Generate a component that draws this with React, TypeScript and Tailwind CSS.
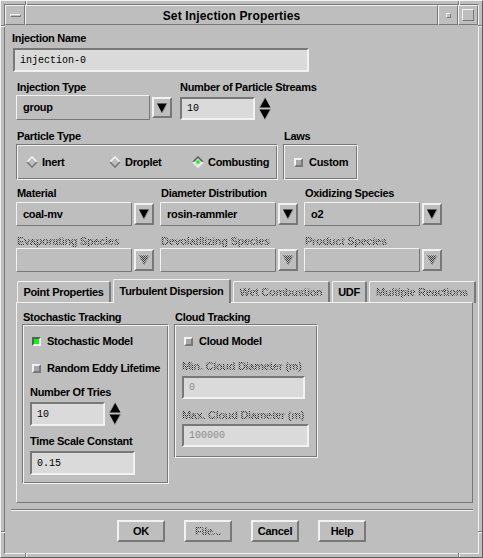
import React from "react";

// Motif-style bevels
const raised =
  "border-2 border-t-[#f2f2f2] border-l-[#f2f2f2] border-r-[#787878] border-b-[#787878]";
const sunken =
  "border-2 border-t-[#787878] border-l-[#787878] border-r-[#f2f2f2] border-b-[#f2f2f2]";
const raised1 =
  "border border-t-[#f2f2f2] border-l-[#f2f2f2] border-r-[#787878] border-b-[#787878]";
const etched =
  "border border-t-[#787878] border-l-[#787878] border-r-[#f2f2f2] border-b-[#f2f2f2] shadow-[inset_1px_1px_0_#f2f2f2,inset_-1px_-1px_0_#787878]";
const stipple =
  "bg-[repeating-conic-gradient(#2e2e2e_0_25%,transparent_0_50%)] bg-[length:2px_2px] bg-clip-text text-transparent";
const boldText = "text-[11px] font-bold tracking-[-0.3px] whitespace-nowrap";

function Label({
  children,
  disabled = false,
  className = "",
}: {
  children: React.ReactNode;
  disabled?: boolean;
  className?: string;
}) {
  return (
    <div className={`h-[13px] leading-[13px] ${boldText} ${className}`}>
      <span className={disabled ? stipple : "text-black"}>{children}</span>
    </div>
  );
}

function StipplePattern() {
  return (
    <defs>
      <pattern id="stip" width="2" height="2" patternUnits="userSpaceOnUse">
        <rect width="1" height="1" fill="#3a3a3a" />
        <rect x="1" y="1" width="1" height="1" fill="#3a3a3a" />
      </pattern>
    </defs>
  );
}

function DownArrow({ disabled = false }: { disabled?: boolean }) {
  return (
    <svg width="12" height="12" viewBox="0 0 12 12">
      {disabled && <StipplePattern />}
      <polygon points="1,1.5 11,1.5 6,11" fill={disabled ? "url(#stip)" : "#000"} />
      <line x1="11" y1="1.5" x2="6.5" y2="10" stroke="#8c8c8c" strokeWidth="1" />
    </svg>
  );
}

function TextField({
  w,
  h,
  value,
  disabled = false,
  className = "",
}: {
  w: string;
  h: string;
  value: string;
  disabled?: boolean;
  className?: string;
}) {
  return (
    <div
      className={`${w} ${h} ${sunken} bg-[#dadada] flex items-center pl-[5px] font-['Liberation_Mono',monospace] text-[10px] ${
        disabled ? "text-[#8e8e8e]" : "text-black"
      } ${className}`}
    >
      {value}
    </div>
  );
}

function OptionMenu({
  w,
  value = "",
  disabled = false,
  fieldH = "h-[24px]",
  arrowH = "h-[22px]",
}: {
  w: string;
  value?: string;
  disabled?: boolean;
  fieldH?: string;
  arrowH?: string;
}) {
  return (
    <div className="flex items-center">
      <div className={`${w} ${fieldH} ${raised1} flex items-center pl-[6px] ${boldText}`}>{value}</div>
      <div className={`ml-[2px] w-[20px] ${arrowH} ${raised} flex items-center justify-center`}>
        <DownArrow disabled={disabled} />
      </div>
    </div>
  );
}

function Spinner() {
  return (
    <div className="ml-[3px] w-[14px] h-[23px] flex flex-col items-center justify-between">
      <svg width="12" height="11" viewBox="0 0 12 11">
        <polygon points="6,0.5 11.5,10.5 0.5,10.5" fill="#000" />
        <line x1="6" y1="0.5" x2="0.5" y2="10.5" stroke="#9a9a9a" />
      </svg>
      <svg width="12" height="11" viewBox="0 0 12 11">
        <polygon points="0.5,0.5 11.5,0.5 6,10.5" fill="#000" />
        <line x1="11.5" y1="0.5" x2="6" y2="10.5" stroke="#9a9a9a" />
      </svg>
    </div>
  );
}

function Diamond({ on = false }: { on?: boolean }) {
  return (
    <svg width="12" height="12" viewBox="0 0 12 12">
      <polygon points="6,0.5 11.5,6 6,11.5 0.5,6" fill={on ? "#d6d6d6" : "#bebebe"} />
      <polyline points="1,6 6,1 11,6" fill="none" stroke={on ? "#5e5e5e" : "#f2f2f2"} strokeWidth="1.6" />
      <polyline points="1,6 6,11 11,6" fill="none" stroke={on ? "#f2f2f2" : "#7a7a7a"} strokeWidth="1.6" />
      {on && <rect x="4.5" y="4.5" width="3" height="3" fill="#00ff00" />}
    </svg>
  );
}

function Radio({ label, on = false }: { label: string; on?: boolean }) {
  return (
    <div className="w-[83px] flex items-center">
      <Diamond on={on} />
      <span className={`ml-[4px] ${boldText}`}>{label}</span>
    </div>
  );
}

function Check({ on = false }: { on?: boolean }) {
  return (
    <div
      className={`w-[9px] h-[9px] ${
        on
          ? "border-2 border-t-[#5e5e5e] border-l-[#5e5e5e] border-r-[#f2f2f2] border-b-[#f2f2f2] bg-[#00ff00]"
          : "border-2 border-t-[#f2f2f2] border-l-[#f2f2f2] border-r-[#787878] border-b-[#787878] bg-[#a6a6a6]"
      }`}
    />
  );
}

function CheckRow({ label, on = false, className = "" }: { label: string; on?: boolean; className?: string }) {
  return (
    <div className={`h-[13px] flex items-center ${className}`}>
      <Check on={on} />
      <span className={`ml-[6px] ${boldText}`}>{label}</span>
    </div>
  );
}

function Tab({ label, w, active = false, disabled = false }: { label: string; w: string; active?: boolean; disabled?: boolean }) {
  return (
    <div
      className={`${w} ${
        active ? "h-[24px] relative z-10 bg-[#bebebe]" : "h-[22px]"
      } border-t border-l border-r-2 border-t-[#f2f2f2] border-l-[#f2f2f2] border-r-[#787878] rounded-t-[2px] flex items-center justify-center ${boldText}`}
    >
      <span className={disabled ? stipple : "text-black"}>{label}</span>
    </div>
  );
}

function Button({ label, disabled = false }: { label: string; disabled?: boolean }) {
  return (
    <div className={`w-[48px] h-[22px] ${raised} flex items-center justify-center ${boldText}`}>
      <span className={disabled ? stipple : "text-black"}>{label}</span>
    </div>
  );
}

// small notches in the window frame marking the resize corners
function Notch({ className }: { className: string }) {
  return <div className={`absolute ${className}`} />;
}

export default function App() {
  return (
    <div className="relative w-[483px] h-[558px] bg-[#bebebe] border border-t-[#f2f2f2] border-l-[#f2f2f2] border-r-[#5e5e5e] border-b-[#5e5e5e] p-[3px] font-['Liberation_Sans',Arial,sans-serif] text-black select-none">
      <Notch className="left-[24px] top-0 w-[2px] h-[4px] border-l border-l-[#787878] border-r border-r-[#f2f2f2]" />
      <Notch className="left-[457px] top-0 w-[2px] h-[4px] border-l border-l-[#787878] border-r border-r-[#f2f2f2]" />
      <Notch className="left-[24px] bottom-0 w-[2px] h-[4px] border-l border-l-[#787878] border-r border-r-[#f2f2f2]" />
      <Notch className="left-[457px] bottom-0 w-[2px] h-[4px] border-l border-l-[#787878] border-r border-r-[#f2f2f2]" />
      <Notch className="left-0 top-[24px] w-[4px] h-[2px] border-t border-t-[#787878] border-b border-b-[#f2f2f2]" />
      <Notch className="right-0 top-[24px] w-[4px] h-[2px] border-t border-t-[#787878] border-b border-b-[#f2f2f2]" />
      <Notch className="left-0 bottom-[24px] w-[4px] h-[2px] border-t border-t-[#787878] border-b border-b-[#f2f2f2]" />
      <Notch className="right-0 bottom-[24px] w-[4px] h-[2px] border-t border-t-[#787878] border-b border-b-[#f2f2f2]" />

      <div className="flex flex-col h-full border border-t-[#787878] border-l-[#787878] border-r-[#f2f2f2] border-b-[#f2f2f2]">
        {/* title bar */}
        <div className="flex h-[20px] shrink-0">
          <div className={`w-[20px] h-full ${raised1} flex items-center justify-center`}>
            <div className="w-[11px] h-[3px] border border-t-[#f2f2f2] border-l-[#f2f2f2] border-r-[#787878] border-b-[#787878]" />
          </div>
          <div className={`flex-1 h-full ${raised1} flex items-center justify-center pt-[1px] text-[12px] font-bold tracking-[0.15px]`}>
            Set Injection Properties
          </div>
          <div className={`w-[20px] h-full ${raised1} flex items-center justify-center`}>
            <div className="w-[5px] h-[5px] border border-t-[#f2f2f2] border-l-[#f2f2f2] border-r-[#787878] border-b-[#787878]" />
          </div>
          <div className={`w-[20px] h-full ${raised1} flex items-center justify-center`}>
            <div className="w-[12px] h-[12px] border border-t-[#f2f2f2] border-l-[#f2f2f2] border-r-[#787878] border-b-[#787878]" />
          </div>
        </div>

        {/* injection name */}
        <Label className="mt-[7px] ml-[7px]">Injection Name</Label>
        <TextField w="w-[296px]" h="h-[24px]" value="injection-0" className="mt-[3px] ml-[8px]" />

        {/* injection type / streams */}
        <div className="flex mt-[9px] ml-[11px]">
          <div className="flex flex-col">
            <Label className="pl-[1px]">Injection Type</Label>
            <div className="mt-[1px]">
              <OptionMenu w="w-[134px]" value="group" fieldH="h-[25px]" arrowH="h-[21px]" />
            </div>
          </div>
          <div className="flex flex-col ml-[8px]">
            <Label>Number of Particle Streams</Label>
            <div className="flex mt-[3px]">
              <TextField w="w-[75px]" h="h-[23px]" value="10" />
              <Spinner />
            </div>
          </div>
        </div>

        {/* particle type / laws */}
        <div className="flex mt-[10px] ml-[11px]">
          <div className="flex flex-col">
            <Label className="pl-[1px]">Particle Type</Label>
            <div className={`mt-[1px] w-[262px] h-[36px] ${etched} flex items-center pl-[9px]`}>
              <Radio label="Inert" />
              <Radio label="Droplet" />
              <Radio label="Combusting" on />
            </div>
          </div>
          <div className="flex flex-col ml-[5px]">
            <Label className="pl-[1px]">Laws</Label>
            <div className={`mt-[1px] w-[75px] h-[36px] ${etched} flex items-center pl-[10px]`}>
              <CheckRow label="Custom" />
            </div>
          </div>
        </div>

        {/* species selectors */}
        <div className="flex gap-[6px] mt-[7px] ml-[11px]">
          <div className="flex flex-col">
            <Label className="pl-[1px]">Material</Label>
            <div className="mt-[2px]">
              <OptionMenu w="w-[116px]" value="coal-mv" />
            </div>
          </div>
          <div className="flex flex-col">
            <Label className="pl-[1px]">Diameter Distribution</Label>
            <div className="mt-[2px]">
              <OptionMenu w="w-[116px]" value="rosin-rammler" />
            </div>
          </div>
          <div className="flex flex-col">
            <Label className="pl-[1px]">Oxidizing Species</Label>
            <div className="mt-[2px]">
              <OptionMenu w="w-[116px]" value="o2" />
            </div>
          </div>
        </div>
        <div className="flex gap-[6px] mt-[9px] ml-[11px]">
          <div className="flex flex-col">
            <Label className="pl-[1px]" disabled>
              Evaporating Species
            </Label>
            <OptionMenu w="w-[116px]" disabled />
          </div>
          <div className="flex flex-col">
            <Label className="pl-[1px]" disabled>
              Devolatilizing Species
            </Label>
            <OptionMenu w="w-[116px]" disabled />
          </div>
          <div className="flex flex-col">
            <Label className="pl-[1px]" disabled>
              Product Species
            </Label>
            <OptionMenu w="w-[116px]" disabled />
          </div>
        </div>

        {/* tabs */}
        <div className="flex items-end gap-[2px] mt-[7px] ml-[12px] h-[24px]">
          <Tab label="Point Properties" w="w-[94px]" />
          <Tab label="Turbulent Dispersion" w="w-[118px]" active />
          <Tab label="Wet Combustion" w="w-[97px]" disabled />
          <Tab label="UDF" w="w-[35px]" />
          <Tab label="Multiple Reactions" w="w-[107px]" disabled />
        </div>
        <div className="relative -mt-[1px] ml-[11px] w-[457px] h-[201px] border border-t-[#f2f2f2] border-l-[#f2f2f2] border-r-[#787878] border-b-[#787878] pt-[8px] pl-[5px] flex">
          {/* stochastic tracking */}
          <div className="flex flex-col">
            <Label className="pl-[1px]">Stochastic Tracking</Label>
            <div className={`w-[147px] h-[160px] ${etched} flex flex-col pt-[10px] pl-[9px]`}>
              <CheckRow label="Stochastic Model" on />
              <CheckRow label="Random Eddy Lifetime" className="mt-[14px]" />
              <Label className="mt-[11px] -ml-[2px]">Number Of Tries</Label>
              <div className="flex mt-[3px] -ml-[2px]">
                <TextField w="w-[75px]" h="h-[24px]" value="10" />
                <Spinner />
              </div>
              <Label className="mt-[9px] -ml-[2px]">Time Scale Constant</Label>
              <TextField w="w-[105px]" h="h-[24px]" value="0.15" className="mt-[3px] -ml-[2px]" />
            </div>
          </div>
          {/* cloud tracking */}
          <div className="flex flex-col ml-[5px]">
            <Label className="pl-[1px]">Cloud Tracking</Label>
            <div className={`w-[144px] h-[134px] ${etched} flex flex-col pt-[10px] pl-[9px]`}>
              <CheckRow label="Cloud Model" />
              <Label className="mt-[12px] -ml-[2px]" disabled>
                Min. Cloud Diameter (m)
              </Label>
              <TextField w="w-[123px]" h="h-[23px]" value="0" disabled className="mt-[3px] -ml-[2px]" />
              <Label className="mt-[10px] -ml-[2px]" disabled>
                Max. Cloud Diameter (m)
              </Label>
              <TextField w="w-[127px]" h="h-[23px]" value="100000" disabled className="mt-[2px] -ml-[2px]" />
            </div>
          </div>
        </div>

        {/* separator */}
        <div className="mt-[6px] ml-[6px] w-[462px] h-[2px] border-t border-t-[#787878] border-b border-b-[#f2f2f2]" />

        {/* action buttons */}
        <div className="flex justify-center gap-[19px] mt-[9px]">
          <Button label="OK" />
          <Button label="File..." disabled />
          <Button label="Cancel" />
          <Button label="Help" />
        </div>
      </div>
    </div>
  );
}
